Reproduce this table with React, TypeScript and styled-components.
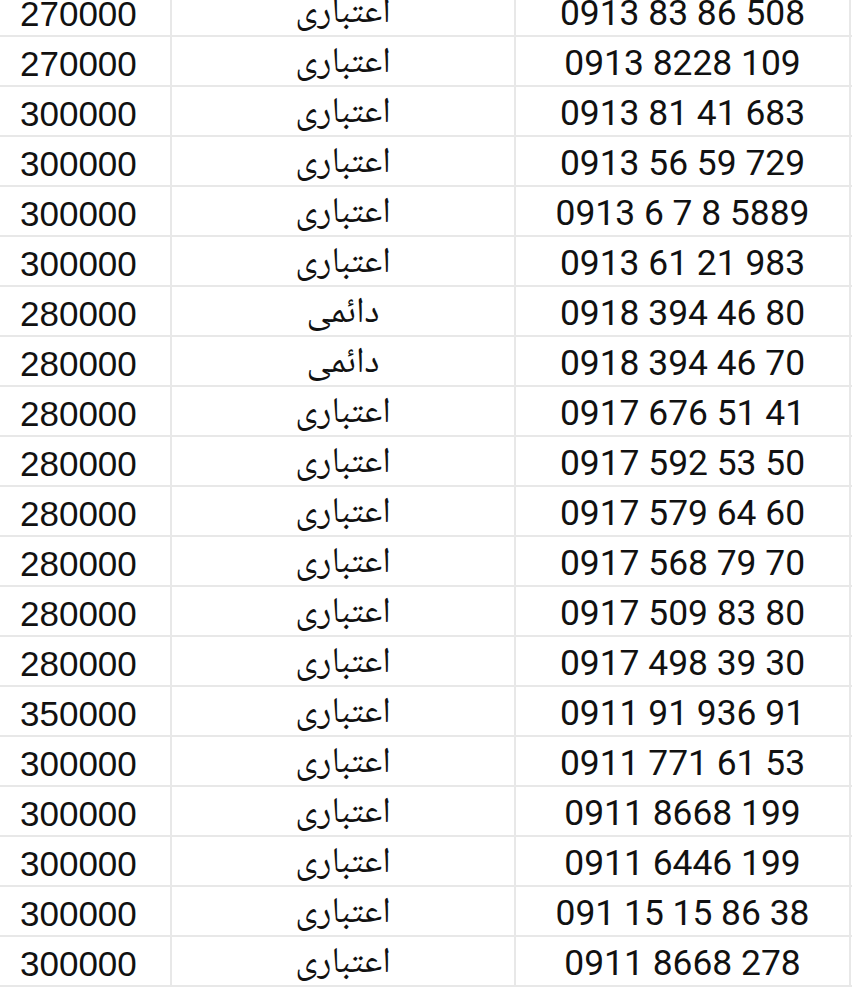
import styled, { createGlobalStyle } from "styled-components";

const GlobalStyle = createGlobalStyle`
  html, body {
    margin: 0;
    padding: 0;
    background: #ffffff;
    overflow: hidden;
  }
`;

type Row = {
  price: string;
  kind: string;
  number: string;
};

const CREDIT = "اعتباری";
const PERMANENT = "دائمی";

const rows: Row[] = [
  { price: "270000", kind: CREDIT, number: "0913 83 86 508" },
  { price: "270000", kind: CREDIT, number: "0913 8228 109" },
  { price: "300000", kind: CREDIT, number: "0913 81 41 683" },
  { price: "300000", kind: CREDIT, number: "0913 56 59 729" },
  { price: "300000", kind: CREDIT, number: "0913 6 7 8 5889" },
  { price: "300000", kind: CREDIT, number: "0913 61 21 983" },
  { price: "280000", kind: PERMANENT, number: "0918 394 46 80" },
  { price: "280000", kind: PERMANENT, number: "0918 394 46 70" },
  { price: "280000", kind: CREDIT, number: "0917 676 51 41" },
  { price: "280000", kind: CREDIT, number: "0917 592 53 50" },
  { price: "280000", kind: CREDIT, number: "0917 579 64 60" },
  { price: "280000", kind: CREDIT, number: "0917 568 79 70" },
  { price: "280000", kind: CREDIT, number: "0917 509 83 80" },
  { price: "280000", kind: CREDIT, number: "0917 498 39 30" },
  { price: "350000", kind: CREDIT, number: "0911 91 936 91" },
  { price: "300000", kind: CREDIT, number: "0911 771 61 53" },
  { price: "300000", kind: CREDIT, number: "0911 8668 199" },
  { price: "300000", kind: CREDIT, number: "0911 6446 199" },
  { price: "300000", kind: CREDIT, number: "091 15 15 86 38" },
  { price: "300000", kind: CREDIT, number: "0911 8668 278" },
];

const Sheet = styled.div`
  width: 852px;
  height: 990px;
  overflow: hidden;
  background: #ffffff;
`;

const Grid = styled.div`
  display: grid;
  grid-template-columns: 172px 344px 335px 1px;
  margin-top: -13px;
`;

const Cell = styled.div<{ $align: "left" | "center" }>`
  height: 48px;
  box-sizing: content-box;
  border-bottom: 2px solid #e8e8e8;
  border-right: 2px solid #e8e8e8;
  text-align: ${(p) => p.$align};
  color: #111111;
  white-space: nowrap;
  overflow: hidden;
`;

const PriceCell = styled(Cell)`
  height: 42px;
  padding: 6px 0 0 20px;
  width: 150px;
  font-family: "Liberation Sans", Arial, sans-serif;
  font-size: 35px;
  line-height: 41px;
`;

const KindCell = styled(Cell)`
  height: 40px;
  padding: 8px 0 0 0;
  width: 342px;
  font-family: "Noto Naskh Arabic", "Noto Sans Arabic", "DejaVu Sans", sans-serif;
  font-size: 36px;
  line-height: 40px;
`;

const NumberCell = styled(Cell)`
  height: 42px;
  padding: 6px 0 0 0;
  width: 333px;
  font-family: Roboto, "Noto Sans", sans-serif;
  font-size: 35.4px;
  line-height: 41px;
`;

const Edge = styled.div`
  height: 48px;
  border-bottom: 2px solid #e8e8e8;
`;

export default function App() {
  return (
    <Sheet>
      <GlobalStyle />
      <Grid>
        {rows.map((row, i) => (
          <Row key={i} row={row} />
        ))}
      </Grid>
    </Sheet>
  );
}

function Row({ row }: { row: Row }) {
  return (
    <>
      <PriceCell $align="left">{row.price}</PriceCell>
      <KindCell $align="center" dir="rtl">
        {row.kind}
      </KindCell>
      <NumberCell $align="center">{row.number}</NumberCell>
      <Edge />
    </>
  );
}
